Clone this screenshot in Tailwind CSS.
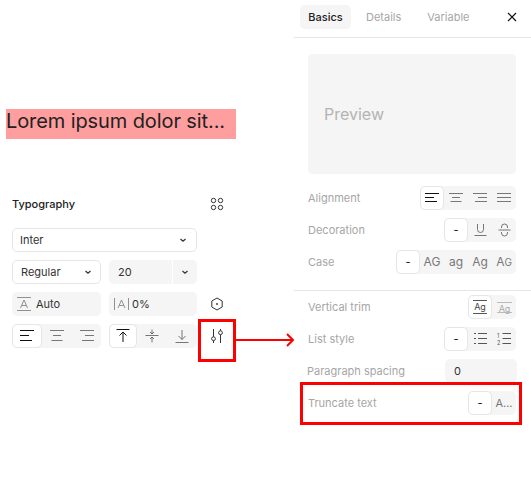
<!DOCTYPE html>
<html lang="en">
<head>
    <meta charset="UTF-8">
    <title>Typography</title>
    <script src="https://cdn.jsdelivr.net/npm/@tailwindcss/browser@4"></script>
</head>
<body class="bg-white font-['Inter',sans-serif]">
    <div class="relative w-[531px] h-[502px] flex overflow-hidden">
        <!-- Left: canvas text + typography panel -->
        <div class="w-[294px] shrink-0 pt-[109px]">
            <div class="ml-[6px] w-[230px] h-[30px] bg-[#ff9e9e] text-[20px] leading-[24px] tracking-[-0.1px] text-[#222] whitespace-nowrap">Lorem ipsum dolor sit...</div>

            <div class="ml-[12px] w-[212px] mt-[54px] flex items-center justify-between h-[22px]">
                <span class="text-[11px] font-medium text-[#222]">Typography</span>
                <svg width="14" height="14" viewBox="0 0 14 14" fill="none" stroke="#333" stroke-width="1"><circle cx="3.5" cy="3.5" r="2.2"/><circle cx="10.5" cy="3.5" r="2.2"/><circle cx="3.5" cy="10.5" r="2.2"/><circle cx="10.5" cy="10.5" r="2.2"/></svg>
            </div>

            <div class="ml-[12px] mt-[13px] w-[212px] flex flex-col gap-[8px] text-[11px] text-[#333]">
                <div class="w-[185px] h-[24px] rounded-[5px] border border-[#e6e6e6] flex items-center justify-between pl-[7px] pr-[9px]">
                    <span>Inter</span>
                    <svg width="8" height="8" viewBox="0 0 8 8" fill="none" stroke="#333" stroke-width="1.2"><path d="M1.5 3 L4 5.2 L6.5 3"/></svg>
                </div>
                <div class="flex gap-[8px]">
                    <div class="w-[89px] h-[24px] rounded-[5px] border border-[#e6e6e6] flex items-center justify-between pl-[8px] pr-[8px]">
                        <span>Regular</span>
                        <svg width="8" height="8" viewBox="0 0 8 8" fill="none" stroke="#333" stroke-width="1.2"><path d="M1.5 3 L4 5.2 L6.5 3"/></svg>
                    </div>
                    <div class="w-[88px] h-[24px] rounded-[5px] bg-[#f5f5f5] flex items-center">
                        <span class="w-[63px] pl-[9px]">20</span>
                        <span class="w-[25px] h-[24px] border-l border-white flex items-center justify-center">
                            <svg width="8" height="8" viewBox="0 0 8 8" fill="none" stroke="#333" stroke-width="1.2"><path d="M1.5 3 L4 5.2 L6.5 3"/></svg>
                        </span>
                    </div>
                </div>
                <div class="flex gap-[8px] items-center">
                    <div class="w-[89px] h-[24px] rounded-[5px] bg-[#f5f5f5] flex items-center pl-[5px] gap-[5px]">
                        <svg width="14" height="14" viewBox="0 0 14 14" fill="none" stroke="#777" stroke-width="0.8"><path d="M0 0.5 H14 M0 13.5 H14 M3.5 11 L7 3 L10.5 11 M4.8 8.5 H9.2"/></svg>
                        <span>Auto</span>
                    </div>
                    <div class="w-[88px] h-[24px] rounded-[5px] bg-[#f5f5f5] flex items-center pl-[4px] gap-[2px]">
                        <svg width="17" height="14" viewBox="0 0 17 14" fill="none" stroke="#777" stroke-width="0.8"><path d="M1.5 1 V13 M15.5 1 V13 M5 11 L8.5 3 L12 11 M6.3 8.5 H10.7"/></svg>
                        <span>0%</span>
                    </div>
                    <svg class="ml-[5px]" width="14" height="14" viewBox="0 0 14 14" fill="none" stroke="#333" stroke-width="1"><path d="M7 1 L12.2 4 V10 L7 13 L1.8 10 V4 Z"/><circle cx="7" cy="7" r="0.9" fill="#333" stroke="none"/></svg>
                </div>
                <div class="flex gap-[8px] items-start">
                    <div class="w-[89px] h-[24px] rounded-[5px] bg-[#f5f5f5] flex">
                        <span class="w-[30px] h-[24px] bg-white rounded-[5px] border border-[#e6e6e6] flex items-center justify-center">
                            <svg width="14" height="12" viewBox="0 0 14 12" fill="none" stroke="#111" stroke-width="1"><path d="M0 0.5 H14 M0 5.5 H9 M0 10.5 H12"/></svg>
                        </span>
                        <span class="w-[30px] flex items-center justify-center">
                            <svg width="14" height="12" viewBox="0 0 14 12" fill="none" stroke="#777" stroke-width="1"><path d="M0 0.5 H14 M3 5.5 H11 M1.5 10.5 H12.5"/></svg>
                        </span>
                        <span class="w-[29px] flex items-center justify-center">
                            <svg width="14" height="12" viewBox="0 0 14 12" fill="none" stroke="#777" stroke-width="1"><path d="M0 0.5 H14 M5 5.5 H14 M2 10.5 H14"/></svg>
                        </span>
                    </div>
                    <div class="w-[88px] h-[24px] rounded-[5px] bg-[#f5f5f5] flex">
                        <span class="w-[28px] h-[24px] bg-white rounded-[5px] border border-[#e6e6e6] flex items-center justify-center">
                            <svg width="14" height="14" viewBox="0 0 14 14" fill="none" stroke="#111" stroke-width="1"><path d="M0.5 0.5 H13.5 M7 13 V3 M3.5 6.5 L7 3 L10.5 6.5"/></svg>
                        </span>
                        <span class="w-[30px] flex items-center justify-center">
                            <svg width="14" height="14" viewBox="0 0 14 14" fill="none" stroke="#555" stroke-width="0.8"><path d="M0.5 6.5 H13.5 M7 0.5 V5 M5 3 L7 5 L9 3 M7 13.5 V8 M5 10 L7 8 L9 10"/></svg>
                        </span>
                        <span class="w-[30px] flex items-center justify-center">
                            <svg width="14" height="14" viewBox="0 0 14 14" fill="none" stroke="#555" stroke-width="0.8"><path d="M0.5 13.5 H13.5 M7 1 V10.5 M3.5 7 L7 10.5 L10.5 7"/></svg>
                        </span>
                    </div>
                    <svg class="ml-[5px] mt-[4px]" width="14" height="16" viewBox="0 0 14 16" fill="none" stroke="#333" stroke-width="1"><path d="M3.5 1 V8.7 M3.5 12.7 V15 M10.5 1 V2.7 M10.5 6.7 V15"/><circle cx="3.5" cy="10.7" r="1.9"/><circle cx="10.5" cy="4.7" r="1.9"/></svg>
                </div>
            </div>
        </div>

        <!-- Right: settings panel -->
        <div class="w-[237px] shrink-0 text-[11px]">
            <div class="h-[38px] border-b border-[#e6e6e6] flex items-start pt-[5px] pl-[6px]">
                <span class="w-[51px] h-[24px] rounded-[5px] bg-[#f5f5f5] flex items-center justify-center font-medium text-[#222]">Basics</span>
                <span class="ml-[15px] h-[24px] flex items-center text-[#a6a6a6]">Details</span>
                <span class="ml-[26px] h-[24px] flex items-center text-[#a6a6a6]">Variable</span>
                <svg class="ml-[36px] mt-[6px]" width="12" height="12" viewBox="0 0 12 12" fill="none" stroke="#111" stroke-width="1.2"><path d="M2 2 L10 10 M10 2 L2 10"/></svg>
            </div>

            <div class="ml-[14px] mt-[16px] w-[208px] h-[120px] rounded-[4px] bg-[#f5f5f5] flex items-center pl-[16px] text-[16px] text-[#b3b3b3]">Preview</div>

            <div class="ml-[14px] mt-[12px] w-[208px] flex flex-col gap-[8px] text-[#a6a6a6]">
                <div class="h-[24px] flex items-center justify-between">
                    <span>Alignment</span>
                    <div class="w-[96px] h-[24px] rounded-[5px] bg-[#f5f5f5] flex">
                        <span class="w-[24px] h-[24px] bg-white rounded-[5px] border border-[#e6e6e6] flex items-center justify-center">
                            <svg width="14" height="10" viewBox="0 0 14 10" fill="none" stroke="#111" stroke-width="1"><path d="M0 0.5 H14 M0 4.5 H9 M0 8.5 H12"/></svg>
                        </span>
                        <span class="w-[24px] flex items-center justify-center">
                            <svg width="14" height="10" viewBox="0 0 14 10" fill="none" stroke="#777" stroke-width="1"><path d="M0 0.5 H14 M3 4.5 H11 M1.5 8.5 H12.5"/></svg>
                        </span>
                        <span class="w-[24px] flex items-center justify-center">
                            <svg width="14" height="10" viewBox="0 0 14 10" fill="none" stroke="#777" stroke-width="1"><path d="M0 0.5 H14 M5 4.5 H14 M2 8.5 H14"/></svg>
                        </span>
                        <span class="w-[24px] flex items-center justify-center">
                            <svg width="14" height="10" viewBox="0 0 14 10" fill="none" stroke="#777" stroke-width="1"><path d="M0 0.5 H14 M0 4.5 H14 M0 8.5 H14"/></svg>
                        </span>
                    </div>
                </div>
                <div class="h-[24px] flex items-center justify-between">
                    <span>Decoration</span>
                    <div class="w-[72px] h-[24px] rounded-[5px] bg-[#f5f5f5] flex text-[#444]">
                        <span class="w-[24px] h-[24px] bg-white rounded-[5px] border border-[#e6e6e6] flex items-center justify-center text-[#111]">-</span>
                        <span class="w-[24px] flex items-center justify-center">
                            <svg width="13" height="14" viewBox="0 0 13 14" fill="none" stroke="#666" stroke-width="0.9"><path d="M3.5 1 V6.5 A3 3 0 0 0 9.5 6.5 V1 M0.5 12.5 H12.5"/></svg>
                        </span>
                        <span class="w-[24px] flex items-center justify-center">
                            <svg width="13" height="14" viewBox="0 0 13 14" fill="none" stroke="#666" stroke-width="0.9"><path d="M0.5 7 H12.5 M3.5 5 V4 A3 3 0 0 1 9.5 4 V5 M3.5 9 V10 A3 3 0 0 0 9.5 10 V9"/></svg>
                        </span>
                    </div>
                </div>
                <div class="h-[24px] flex items-center justify-between">
                    <span>Case</span>
                    <div class="w-[120px] h-[24px] rounded-[5px] bg-[#f5f5f5] flex text-[#777] text-[12px]">
                        <span class="w-[24px] h-[24px] bg-white rounded-[5px] border border-[#e6e6e6] flex items-center justify-center text-[11px] text-[#111]">-</span>
                        <span class="w-[24px] flex items-center justify-center">AG</span>
                        <span class="w-[24px] flex items-center justify-center">ag</span>
                        <span class="w-[24px] flex items-center justify-center">Ag</span>
                        <span class="w-[24px] flex items-center justify-center">A<span class="text-[10px]">G</span></span>
                    </div>
                </div>
            </div>

            <div class="mt-[16px] h-px bg-[#e6e6e6]"></div>

            <div class="ml-[14px] mt-[4px] w-[208px] flex flex-col gap-[8px] text-[#a6a6a6]">
                <div class="h-[24px] flex items-center justify-between">
                    <span>Vertical trim</span>
                    <div class="w-[48px] h-[24px] rounded-[5px] bg-[#f5f5f5] flex">
                        <span class="w-[24px] h-[24px] bg-white rounded-[5px] border border-[#e6e6e6] flex items-center justify-center">
                            <svg width="14" height="14" viewBox="0 0 14 14" fill="none" stroke="#444" stroke-width="0.9"><path d="M0 0.5 H14 M0 13.5 H14"/><text x="7" y="10" text-anchor="middle" font-size="9" font-family="Inter" fill="#444" stroke="none">Ag</text></svg>
                        </span>
                        <span class="w-[24px] flex items-center justify-center">
                            <svg width="15" height="16" viewBox="0 0 15 16" fill="none" stroke="#bbb" stroke-width="1"><path d="M0 3.5 H15 M0 13.5 H15"/><text x="7.5" y="13" text-anchor="middle" font-size="9" font-family="Inter" fill="#aaa" stroke="none">Ag</text></svg>
                        </span>
                    </div>
                </div>
                <div class="h-[24px] flex items-center justify-between">
                    <span>List style</span>
                    <div class="w-[72px] h-[24px] rounded-[5px] bg-[#f5f5f5] flex">
                        <span class="w-[24px] h-[24px] bg-white rounded-[5px] border border-[#e6e6e6] flex items-center justify-center text-[#111]">-</span>
                        <span class="w-[24px] flex items-center justify-center">
                            <svg width="13" height="12" viewBox="0 0 13 12" fill="none" stroke="#555" stroke-width="1"><path d="M0 0.5 H2 M4 0.5 H13 M0 5.5 H2 M4 5.5 H13 M0 10.5 H2 M4 10.5 H13"/></svg>
                        </span>
                        <span class="w-[24px] flex items-center justify-center">
                            <svg width="14" height="12" viewBox="0 0 14 12" fill="none" stroke="#555" stroke-width="1"><path d="M5.5 0.5 H14 M5.5 5.5 H14 M5.5 10.5 H14"/><text x="0" y="5" font-size="5.5" font-family="Inter" fill="#555" stroke="none">1</text><text x="0" y="12" font-size="5.5" font-family="Inter" fill="#555" stroke="none">2</text></svg>
                        </span>
                    </div>
                </div>
                <div class="h-[24px] flex items-center justify-between ml-[-1px] mr-[-1px]">
                    <span>Paragraph spacing</span>
                    <div class="w-[72px] h-[24px] rounded-[5px] bg-[#f5f5f5] flex items-center pl-[9px] text-[#333]">0</div>
                </div>
                <div class="h-[24px] flex items-center justify-between">
                    <span>Truncate text</span>
                    <div class="w-[48px] h-[24px] rounded-[5px] bg-[#f5f5f5] flex">
                        <span class="w-[24px] h-[24px] bg-white rounded-[5px] border border-[#e6e6e6] flex items-center justify-center text-[#111]">-</span>
                        <span class="w-[24px] flex items-center justify-center text-[#777]">A...</span>
                    </div>
                </div>
            </div>
        </div>

        <!-- Annotations -->
        <div class="absolute left-[198px] top-[319px] w-[38px] h-[43px] border-[3px] border-[#f00]"></div>
        <svg class="absolute left-[235px] top-[333px]" width="60" height="14" viewBox="0 0 60 14" fill="none" stroke="#f00" stroke-width="2"><path d="M0 7 H58 M52 1 L58 7 L52 13"/></svg>
        <div class="absolute left-[300px] top-[382px] w-[222px] h-[43px] border-[3px] border-[#f00]"></div>
    </div>
</body>
</html>
